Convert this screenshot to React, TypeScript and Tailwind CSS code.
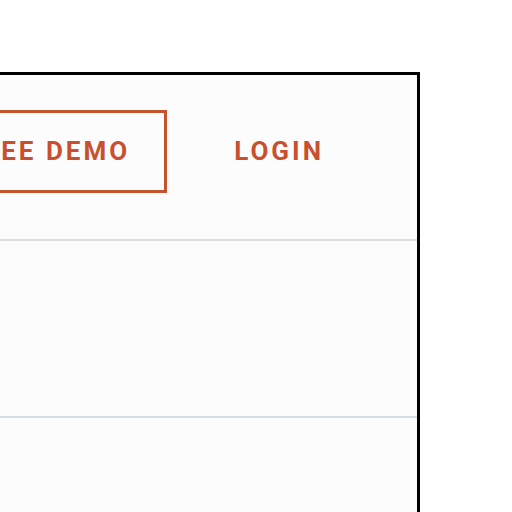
import React from "react";

export default function App() {
  return (
    <div className="w-[512px] h-[512px] bg-white overflow-hidden" style={{ fontFamily: "Roboto, 'Liberation Sans', sans-serif" }}>
      <div className="pt-[72px] w-[420px] overflow-hidden flex justify-end">
        <div className="shrink-0 w-[900px] border-t-[3px] border-r-[3px] border-black bg-[#fcfcfc] h-[460px]">
          <div className="h-[166px] flex justify-end items-start pt-[35px] pr-[93px] border-b-2 border-[#dedede]">
            <div className="h-[83px] border-[3px] border-[#c4532f] flex items-center pl-[37px] pr-[34px] text-[26px] font-bold tracking-[3px] text-[#c8502c]">
              SEE DEMO
            </div>
            <div className="h-[83px] flex items-center ml-[67px] text-[26px] font-bold tracking-[3px] text-[#c8502c]">
              LOGIN
            </div>
          </div>
          <div className="h-[177px] border-b-2 border-[#d6dee6]"></div>
        </div>
      </div>
    </div>
  );
}
